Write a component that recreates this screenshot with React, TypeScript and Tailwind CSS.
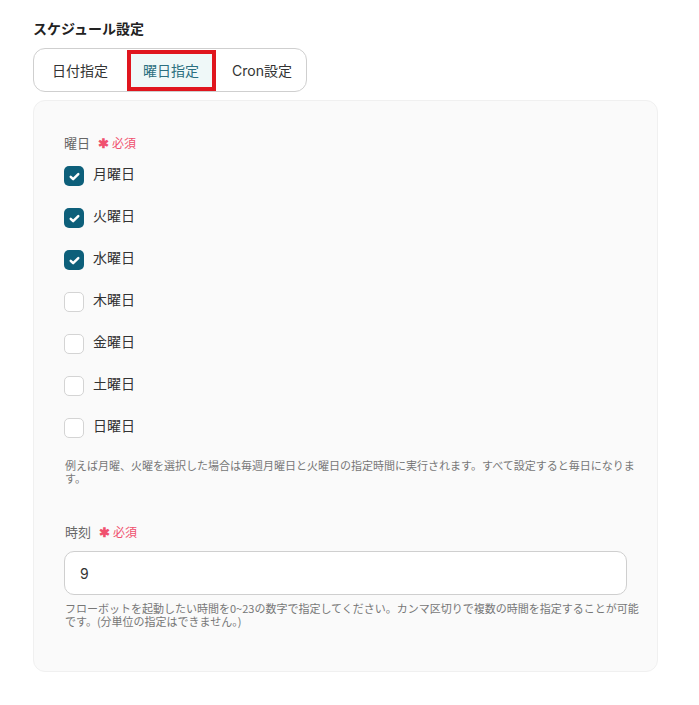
const days = [
  { label: '月曜日', checked: true },
  { label: '火曜日', checked: true },
  { label: '水曜日', checked: true },
  { label: '木曜日', checked: false },
  { label: '金曜日', checked: false },
  { label: '土曜日', checked: false },
  { label: '日曜日', checked: false },
]

function Required() {
  return (
    <span className="ml-2 flex items-center text-[12px] text-[#f0506e]">
      <span className="mr-[3px] text-[13px] font-bold">✱</span>必須
    </span>
  )
}

function Checkbox({ checked }: { checked: boolean }) {
  if (checked) {
    return (
      <span className="flex h-5 w-5 shrink-0 items-center justify-center rounded-[5px] bg-[#0d5f7a]">
        <svg width="13" height="13" viewBox="0 0 24 24" fill="none" stroke="#fff" strokeWidth="4.5" strokeLinecap="round" strokeLinejoin="round">
          <path d="M5 12.5l4.5 4.5L19 7.5" />
        </svg>
      </span>
    )
  }
  return <span className="h-5 w-5 shrink-0 rounded-[5px] border border-[#d4d4d4] bg-white" />
}

export default function App() {
  return (
    <div className="min-h-[705px] bg-white px-[33px] pt-[18px] text-[#333] [font-family:'Noto_Sans_CJK_JP','Noto_Sans',sans-serif]">
      <h2 className="text-[14px] font-bold leading-5 text-[#222]">スケジュール設定</h2>

      {/* タブ */}
      <div className="mt-[10px] flex h-[44px] w-fit items-center rounded-[12px] border border-[#cfcfcf] text-[14px]">
        <button className="pl-[18px] pr-[19px]">日付指定</button>
        <button className="mt-[1px] flex h-[41px] items-center border-4 border-[#e0161e] bg-[#eff8f8] pl-3 pr-[13px] text-[#2b6f80]">
          曜日指定
        </button>
        <button className="pl-4 pr-[14px] [font-family:'Inter','Noto_Sans_CJK_JP',sans-serif]">
          Cron<span className="[font-family:'Noto_Sans_CJK_JP',sans-serif]">設定</span>
        </button>
      </div>

      {/* パネル */}
      <div className="mt-2 w-[625px] rounded-[12px] border border-[#f0f0f0] bg-[#fafafa] pb-[43px] pl-[30px] pr-[30px] pt-[32px]">
        <div className="flex h-5 items-center text-[13px] text-[#666]">
          曜日
          <Required />
        </div>

        <div className="mt-[13px] flex flex-col gap-[22px]">
          {days.map((d) => (
            <label key={d.label} className="flex h-5 items-center gap-[9px] text-[14px]">
              <Checkbox checked={d.checked} />
              <span className="-mt-[5px]">{d.label}</span>
            </label>
          ))}
        </div>

        <p className="mt-[21px] w-[578px] pl-px text-[11px] leading-[13px] text-[#777]">
          例えば月曜、火曜を選択した場合は毎週月曜日と火曜日の指定時間に実行されます。すべて設定すると毎日になります。
        </p>

        <div className="mt-[37px] flex h-5 items-center pl-px text-[13px] text-[#666]">
          時刻
          <Required />
        </div>

        <div className="mt-[9px] flex h-[44px] items-center rounded-[10px] border border-[#cfcfcf] bg-white pl-[15px] text-[14px] [font-family:'Inter',sans-serif]">
          9
        </div>

        <p className="mt-[7px] w-[578px] pl-px text-[11px] leading-[13px] text-[#777]">
          フローボットを起動したい時間を0~23の数字で指定してください。カンマ区切りで複数の時間を指定することが可能です。(分単位の指定はできません。)
        </p>
      </div>
    </div>
  )
}
